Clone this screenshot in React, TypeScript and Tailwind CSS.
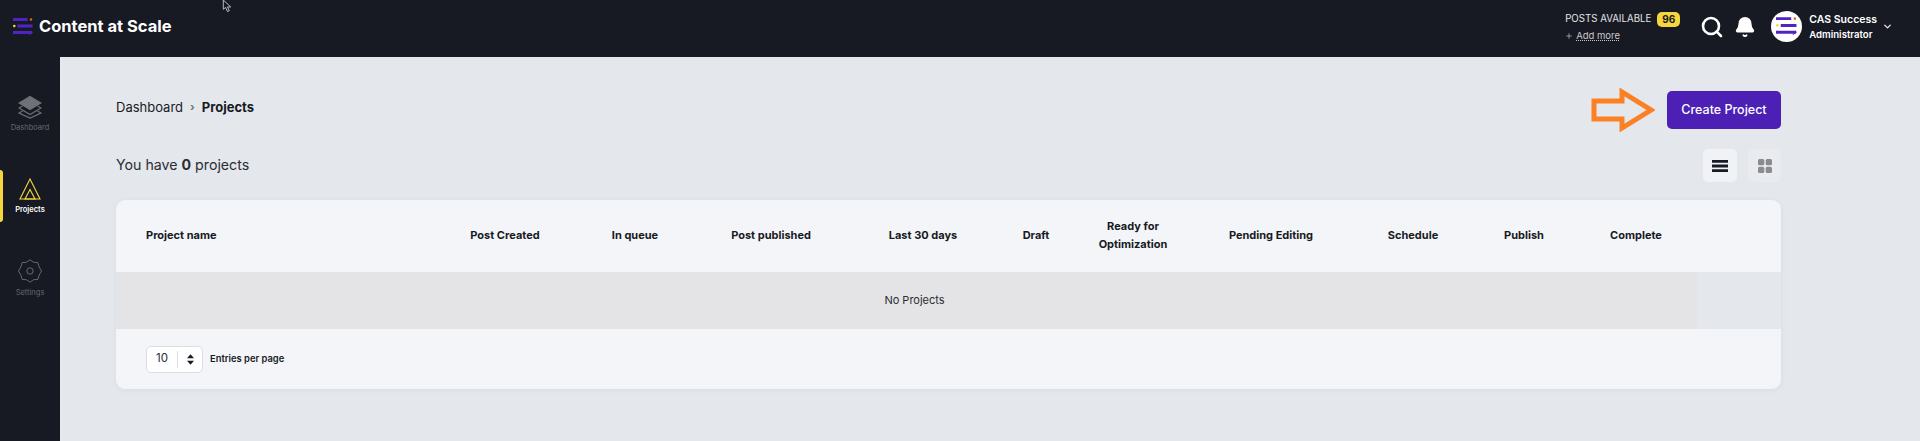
import { Bell, ChevronDown, Plus, Search } from 'lucide-react'

const font = { fontFamily: 'Inter, sans-serif' }

const columns = [
  { label: 'Post Created', width: 'w-[148px]' },
  { label: 'In queue', width: 'w-[112px]' },
  { label: 'Post published', width: 'w-[160px]' },
  { label: 'Last 30 days', width: 'w-[144px]' },
  { label: 'Draft', width: 'w-[82px]' },
  { label: 'Ready for Optimization', width: 'w-[112px]' },
  { label: 'Pending Editing', width: 'w-[164px]' },
  { label: 'Schedule', width: 'w-[120px]' },
  { label: 'Publish', width: 'w-[102px]' },
  { label: 'Complete', width: 'w-[122px]' },
]

const LogoMark = ({ className }: { className?: string }) => (
  <svg viewBox="0 0 20 18" className={className} fill="none">
    <path d="M0 1.500h14.500M4.500 8h15M0 14.500h19" stroke="#5024c4" strokeWidth="2.800" />
    <path d="M15.500 17.500l4.500-3-1.500-1.800z" fill="#5024c4" />
    <circle cx="18" cy="1.500" r="1.200" fill="#f0641e" />
    <circle cx="1.300" cy="8" r="1.300" fill="#f5d63d" />
  </svg>
)

const Sidebar = () => (
  <aside className="flex w-[60px] flex-shrink-0 flex-col gap-7 bg-[#171a23] pt-[33px]">
    <div className="flex h-[52px] flex-col items-center pt-[5px]">
      <svg viewBox="0 0 24 24" className="h-[24px] w-[24px]" fill="none" stroke="#6f7177" strokeWidth="1.2">
        <path d="M12 1.500L23 8l-11 6.500L1 8z" fill="#6f7177" />
        <path d="M4.500 11L1 13l11 6.500L23 13l-3.500-2" />
        <path d="M4.500 16L1 18l11 5 11-5-3.500-2" />
      </svg>
      <span className="mt-[3px] text-[7.500px] leading-[12px] text-[#66686e]">Dashboard</span>
    </div>

    <div className="flex h-[52px]">
      <div className="h-full w-[3px] rounded-r-[3px] bg-[#f5d63d]" />
      <div className="flex w-[57px] flex-col items-center pt-2">
        <svg viewBox="0 0 22 22" className="-ml-[3px] h-[22px] w-[22px]" fill="none" stroke="#f5d63d" strokeWidth="1.100">
          <path d="M11 1L1 21h20z" />
          <path d="M11 11.500L6 21h10z" />
        </svg>
        <span className="-ml-[3px] mt-[4px] text-[7.500px] font-semibold leading-[12px] text-white">Projects</span>
      </div>
    </div>

    <div className="flex h-[52px] flex-col items-center pt-[9px]">
      <svg viewBox="0 0 24 24" className="h-[24px] w-[24px]" fill="none" stroke="#66686e" strokeWidth="1">
        <path d="M12 .8l3.600 2.500 4.300.3 1.200 4.200L23.500 12l-2.400 4.200-1.200 4.200-4.300.3L12 23.200l-3.600-2.500-4.300-.3-1.200-4.200L.5 12l2.400-4.200 1.200-4.200 4.300-.3z" />
        <circle cx="12" cy="12" r="3.200" />
      </svg>
      <span className="mt-[4px] text-[7.500px] leading-[12px] text-[#66686e]">Settings</span>
    </div>
  </aside>
)

const Header = () => (
  <header className="flex h-[57px] flex-shrink-0 items-center justify-between bg-[#171a23] pb-1 pl-[13px] pr-[27px]">
    <div className="flex items-center gap-[6px]">
      <LogoMark className="h-[18px] w-[20px]" />
      <span className="text-[16.500px] font-bold leading-none text-white">Content at Scale</span>
    </div>

    <div className="flex items-center">
      <div className="flex flex-col gap-[3px]">
        <div className="flex items-center gap-[6px]">
          <span className="text-[9.700px] leading-[14px] text-[#e4e4e4]">POSTS AVAILABLE</span>
          <span className="rounded-[5px] bg-[#f5d63d] px-[5px] text-[10px] font-bold leading-[15px] text-[#171a23]">96</span>
        </div>
        <div className="flex items-center gap-[3px] text-[9.500px] leading-[12px] text-[#c9c9c9]">
          <Plus size={8} />
          <span className="underline decoration-dotted">Add more</span>
        </div>
      </div>
      <Search size={24} strokeWidth={2.600} className="ml-[20px] text-white" />
      <Bell size={22} fill="white" className="ml-[10px] text-white" />
      <div className="ml-[15px] flex h-[31px] w-[31px] items-center justify-center rounded-full bg-white">
        <LogoMark className="h-[19px] w-[21px]" />
      </div>
      <div className="ml-[7px] flex flex-col gap-[1px] font-semibold text-white">
        <span className="text-[10.500px] leading-[15px]">CAS Success</span>
        <span className="text-[9.600px] leading-[13px]">Administrator</span>
      </div>
      <ChevronDown size={11} strokeWidth={3} className="ml-[5px] text-[#e4e4e4]" />
    </div>
  </header>
)

const ProjectTable = () => (
  <div className="mt-[18px] w-[1665px] overflow-hidden rounded-[9px] bg-[#f4f5f8] shadow-[0_1px_6px_rgba(0,0,0,0.05)]">
    <table className="w-full table-fixed border-collapse">
      <thead>
        <tr className="h-[72px] text-[11px] font-bold leading-[18px] text-[#171a23]">
          <th className="w-[315px] pb-[2px] pl-[30px] text-left font-bold">Project name</th>
          {columns.map((c) => (
            <th key={c.label} className={`${c.width} px-5 pb-[2px] text-center font-bold`}>
              {c.label}
            </th>
          ))}
          <th className="w-[84px]" />
        </tr>
      </thead>
      <tbody>
        <tr className="h-[57px] text-[11px] text-[#2b2d33]">
          <td colSpan={11} className="bg-[#e4e4e6] pl-4 text-center">
            No Projects
          </td>
          <td className="bg-[#e4e7ec]" />
        </tr>
      </tbody>
    </table>
    <div className="flex h-[60px] items-center gap-[7px] pl-[30px]">
      <div className="flex h-[27px] w-[57px] items-center rounded-[5px] border border-[#dcdde2] bg-white text-[11.500px] text-[#2b2d33]">
        <span className="w-[30px] text-center">10</span>
        <div className="h-[17px] w-px bg-[#dcdde2]" />
        <svg viewBox="0 0 8 12" className="ml-[9px] h-[11px] w-[7px]" fill="#171a23">
          <path d="M4 0l4 4.500H0zM4 12L0 7.500h8z" />
        </svg>
      </div>
      <span className="text-[9.400px] font-semibold text-[#171a23]">Entries per page</span>
    </div>
  </div>
)

export default function App() {
  return (
    <div className="relative flex h-[441px] flex-col overflow-hidden bg-[#e4e7ec]" style={font}>
      <Header />
      <div className="flex flex-1">
        <Sidebar />
        <main className="flex-1 pl-[56px] pt-[34px]">
          <div className="flex h-[38px] w-[1665px] items-center justify-between">
            <div className="flex items-center gap-[7px] pb-[5px] text-[13px] text-[#171a23]">
              <span>Dashboard</span>
              <span className="text-[11px] font-bold text-[#6f7177]">›</span>
              <span className="font-bold">Projects</span>
            </div>
            <div className="flex items-center gap-[12px]">
              <svg viewBox="0 0 64 44" className="h-[44px] w-[64px]" fill="none" stroke="#fb8124" strokeWidth="5">
                <path d="M3 13h28V4l29 18-29 18V31H3z" />
              </svg>
              <button className="h-[38px] w-[114px] rounded-[5px] bg-[#4c1fb5] text-[12.500px] font-medium text-white">
                Create Project
              </button>
            </div>
          </div>

          <div className="mt-5 flex h-[33px] w-[1665px] items-center justify-between">
            <p className="pb-[2px] text-[14.200px] text-[#2b2d33]">
              You have <b className="font-bold">0</b> projects
            </p>
            <div className="flex gap-[11px]">
              <div className="flex h-[33px] w-[34px] items-center justify-center rounded-[5px] bg-[#f1f2f5]">
                <svg viewBox="0 0 16 12" className="h-[12px] w-[16px]" fill="#171a23">
                  <path d="M0 0h16v2.800H0zM0 4.600h16v2.800H0zM0 9.200h16V12H0z" />
                </svg>
              </div>
              <div className="flex h-[33px] w-[33px] items-center justify-center rounded-[5px] bg-[#e9ebef]">
                <svg viewBox="0 0 14 14" className="h-[14px] w-[14px]" fill="#8a8b8f">
                  <rect width="6.300" height="6.300" rx="1.500" />
                  <rect x="7.700" width="6.300" height="6.300" rx="1.500" />
                  <rect y="7.700" width="6.300" height="6.300" rx="1.500" />
                  <rect x="7.700" y="7.700" width="6.300" height="6.300" rx="1.500" />
                </svg>
              </div>
            </div>
          </div>

          <ProjectTable />
        </main>
      </div>

      {/* Mouse pointer caught in the shot */}
      <svg viewBox="0 0 10 14" className="absolute left-[222px] top-0 h-[13px] w-[10px]" fill="#171a23" stroke="#c9c9c9" strokeWidth="1">
        <path d="M1 0v10l2.500-2 2 4.500 2-1-2-4H9z" />
      </svg>
    </div>
  )
}
